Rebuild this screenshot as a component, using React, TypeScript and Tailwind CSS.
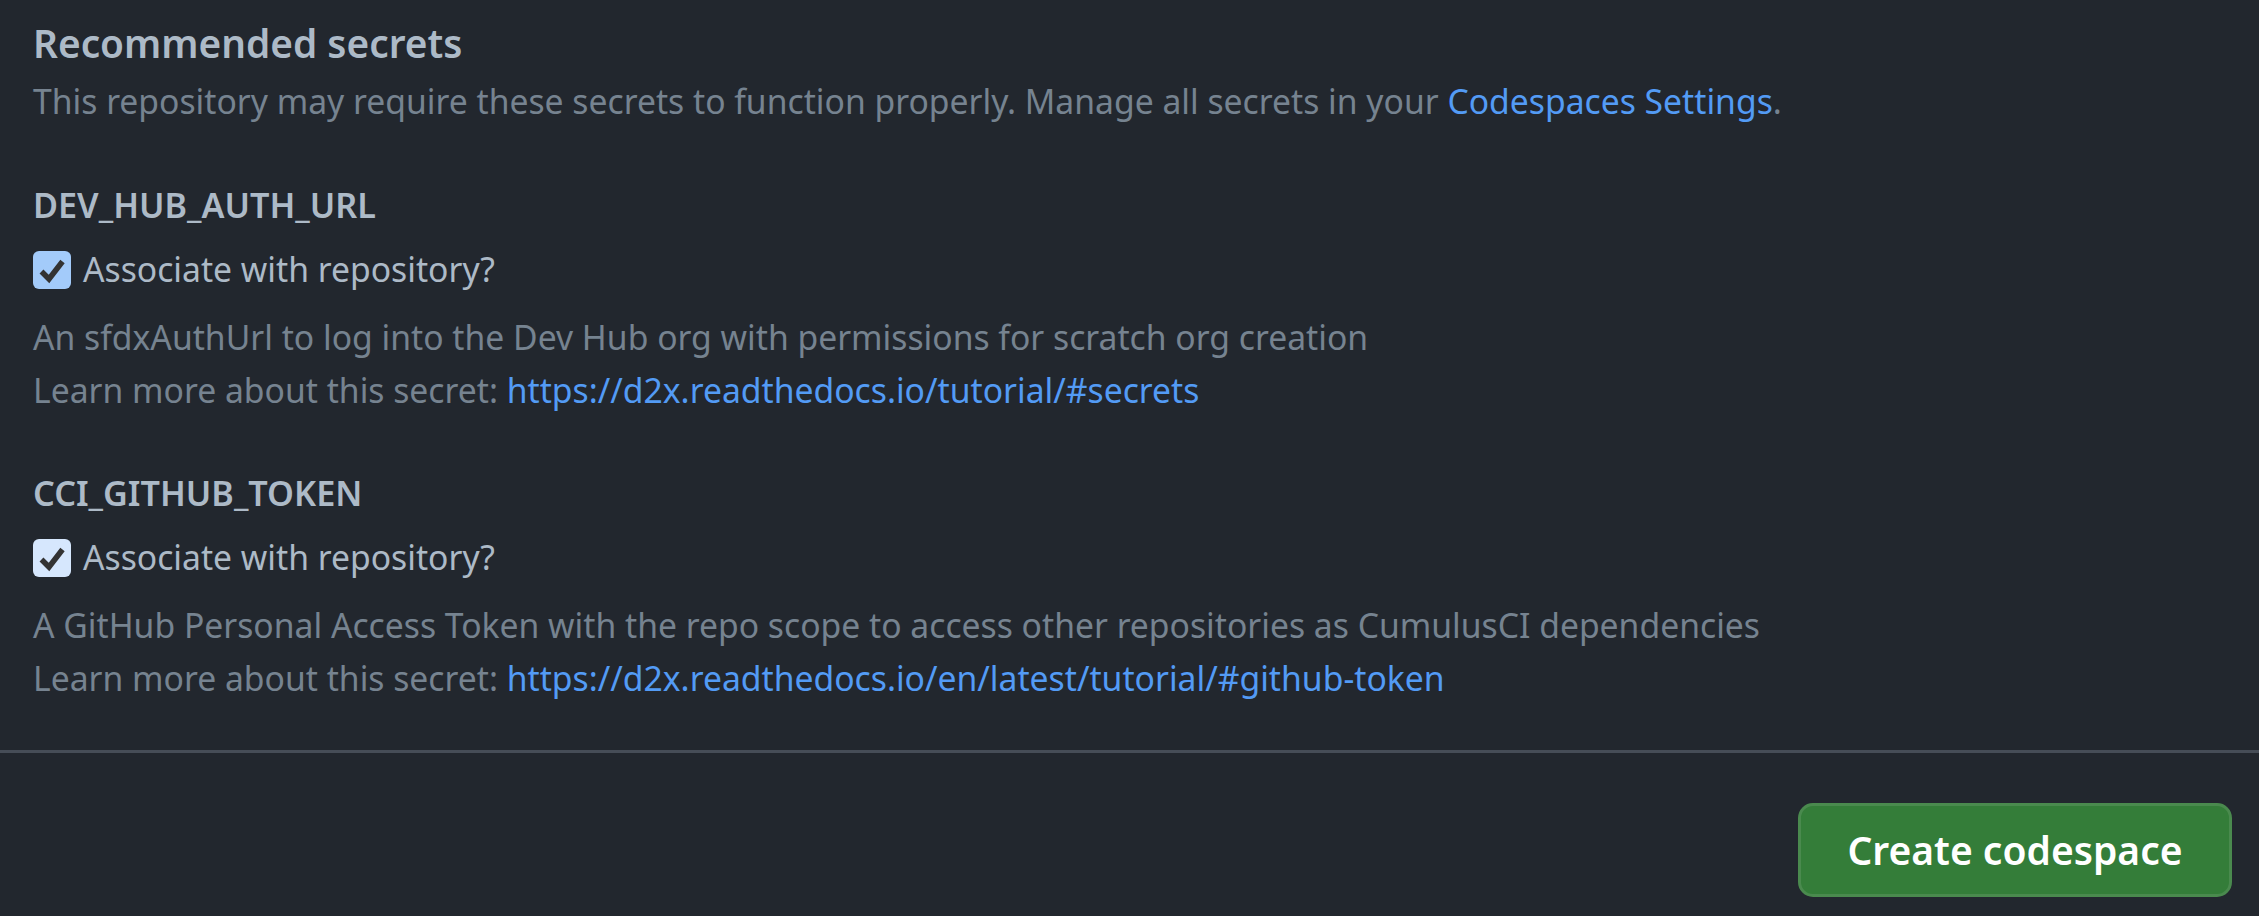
import React from "react";

function Check({ fill }: { fill: string }) {
  return (
    <span
      className="inline-flex h-[38px] w-[38px] shrink-0 items-center justify-center rounded-[6px]"
      style={{ backgroundColor: fill }}
    >
      <svg width="38" height="38" viewBox="0 0 38 38">
        <path d="M8.5 20.5 L16 28 L29.5 10.5" fill="none" stroke="#333333" strokeWidth="5.5" strokeLinecap="butt" strokeLinejoin="miter" />
      </svg>
    </span>
  );
}

function Secret({
  name,
  fill,
  desc,
  url,
  first,
}: {
  name: string;
  fill: string;
  desc: string;
  url: string;
  first?: boolean;
}) {
  return (
    <div className={first ? "mt-[47px]" : "mt-[46px]"}>
      <div className="h-[60px] text-[34.2px] font-semibold leading-[60px] text-[#adbac7]">{name}</div>
      <div className="mt-[8px] flex h-[53px] items-center gap-[12px]">
        <Check fill={fill} />
        <span className="text-[33.7px] leading-[53px] text-[#adbac7]">Associate with repository?</span>
      </div>
      <div className="mt-[15px] text-[33.7px] leading-[53px] text-[#768390]">
        <div>{desc}</div>
        <div>
          Learn more about this secret: <a className="text-[#539bf5]">{url}</a>
        </div>
      </div>
    </div>
  );
}

export default function App() {
  return (
    <div
      className="min-h-[916px] w-full bg-[#22272e]"
      style={{ fontFamily: '"Noto Sans", "Open Sans", sans-serif' }}
    >
      <div className="px-[33px] pt-[13px]">
        <div className="h-[60px] text-[38.8px] font-semibold leading-[60px] text-[#adbac7]">Recommended secrets</div>
        <div className="mt-[2px] text-[33.7px] leading-[53px] text-[#768390]">
          This repository may require these secrets to function properly. Manage all secrets in your{" "}
          <a className="text-[#539bf5]">Codespaces Settings</a>.
        </div>
        <Secret
          first
          name="DEV_HUB_AUTH_URL"
          fill="#a3cbfa"
          desc="An sfdxAuthUrl to log into the Dev Hub org with permissions for scratch org creation"
          url="https://d2x.readthedocs.io/tutorial/#secrets"
        />
        <Secret
          name="CCI_GITHUB_TOKEN"
          fill="#d6e7fd"
          desc="A GitHub Personal Access Token with the repo scope to access other repositories as CumulusCI dependencies"
          url="https://d2x.readthedocs.io/en/latest/tutorial/#github-token"
        />
      </div>
      <div className="mt-[45px] h-[3px] w-full bg-[#464d57]" />
      <div className="flex justify-end px-[27px] pt-[50px] pb-[18px]">
        <button className="flex h-[94px] w-[434px] items-center justify-center rounded-[15px] border-[3px] border-[#4a8a4e] bg-[#347d39] text-[39px] font-semibold text-white">
          Create codespace
        </button>
      </div>
    </div>
  );
}
